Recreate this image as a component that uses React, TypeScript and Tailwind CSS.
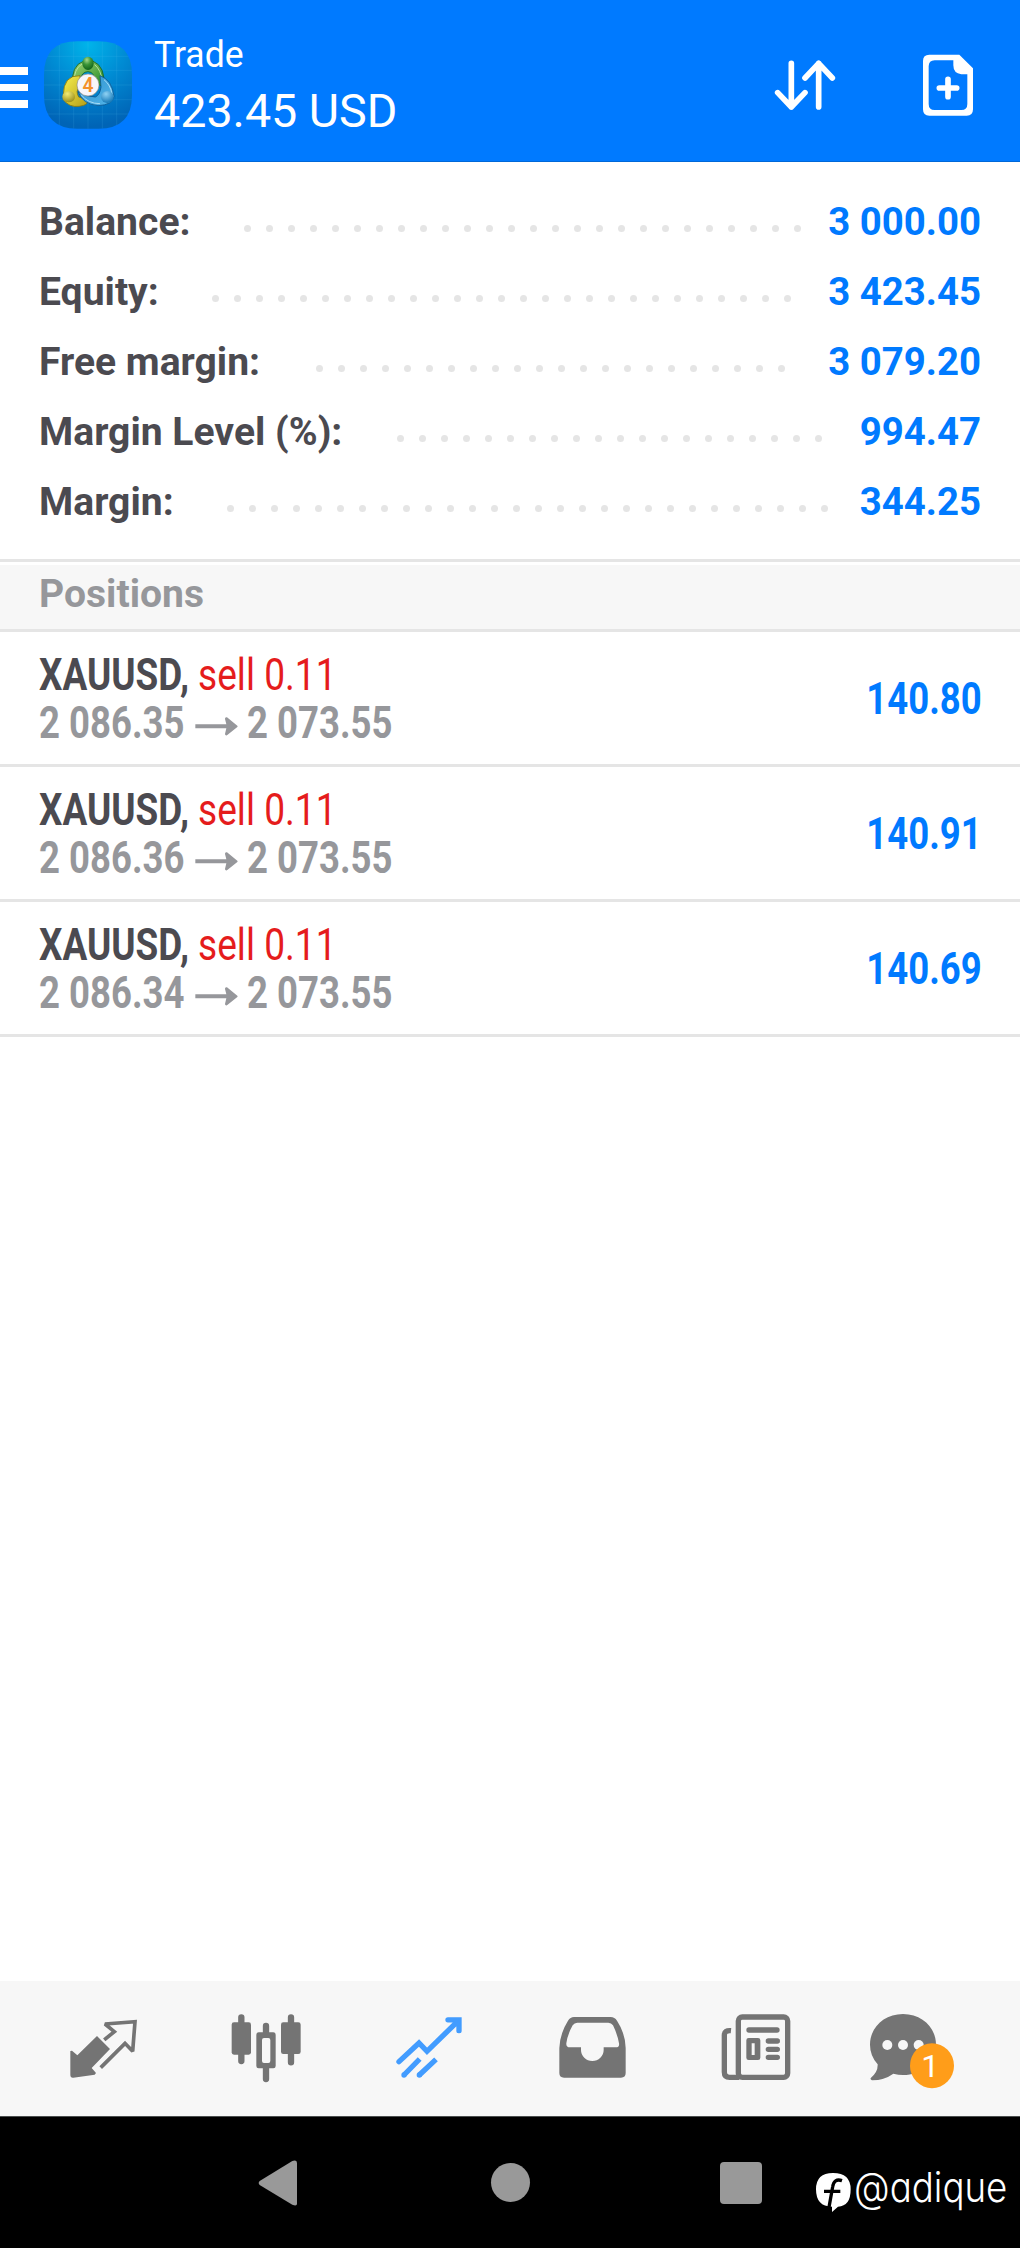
import React from "react";

const account = [
  { label: "Balance:", value: "3 000.00", lead: 205, dots: 26 },
  { label: "Equity:", value: "3 423.45", lead: 173, dots: 27 },
  { label: "Free margin:", value: "3 079.20", lead: 277, dots: 22 },
  { label: "Margin Level (%):", value: "994.47", lead: 358, dots: 20 },
  { label: "Margin:", value: "344.25", lead: 188, dots: 28 },
];

const positions = [
  { open: "2 086.35", current: "2 073.55", profit: "140.80" },
  { open: "2 086.36", current: "2 073.55", profit: "140.91" },
  { open: "2 086.34", current: "2 073.55", profit: "140.69" },
];

function Logo() {
  return (
    <svg className="h-[88px] w-[88px]" viewBox="132 124 264 264">
      <defs>
        <radialGradient id="tile" gradientUnits="userSpaceOnUse" cx="264" cy="135" r="245">
          <stop offset="0" stopColor="#00b4ea" />
          <stop offset="0.5" stopColor="#0089d2" />
          <stop offset="1" stopColor="#0064b6" />
        </radialGradient>
        <linearGradient id="green" x1="0" y1="0" x2="1" y2="1">
          <stop offset="0" stopColor="#a6d873" />
          <stop offset="1" stopColor="#1c8526" />
        </linearGradient>
        <linearGradient id="yellow" x1="0" y1="0" x2="1" y2="1">
          <stop offset="0" stopColor="#f7f04e" />
          <stop offset="1" stopColor="#b49d17" />
        </linearGradient>
        <linearGradient id="blue" x1="0" y1="0" x2="1" y2="1">
          <stop offset="0" stopColor="#2b8fcb" />
          <stop offset="1" stopColor="#55b6ea" />
        </linearGradient>
        <radialGradient id="greenBall" cx=".4" cy=".25" r=".8">
          <stop offset="0" stopColor="#a5d98c" />
          <stop offset=".45" stopColor="#3a9437" />
          <stop offset="1" stopColor="#0c5d17" />
        </radialGradient>
        <radialGradient id="yellowBall" cx=".4" cy=".25" r=".8">
          <stop offset="0" stopColor="#f3ec75" />
          <stop offset="1" stopColor="#968a16" />
        </radialGradient>
        <radialGradient id="blueBall" cx=".4" cy=".25" r=".8">
          <stop offset="0" stopColor="#8fd2f4" />
          <stop offset="1" stopColor="#0d73b4" />
        </radialGradient>
      </defs>
      <path d="M132 225Q132 125 232 125H296Q396 125 396 225V286Q396 387 296 387H232Q132 387 132 286Z" fill="url(#tile)" />
      <path d="M178 136V376M221 126V386M264 125V387M307 126V386M350 136V376M143 170H385M133 212H395M132 256H396M133 300H395M143 343H385" stroke="#5cc4f4" strokeOpacity=".22" strokeWidth="2" fill="none" />
      <path d="M217 262Q212 196 252 184L264 208L278 184Q318 200 311 262L286 250Q284 216 264 216Q244 216 240 244Z" fill="url(#green)" stroke="#136123" strokeWidth="2.5" />
      <path d="M222 250Q221 208 246 193M306 244Q304 212 284 195" fill="none" stroke="#b7e29a" strokeWidth="3" />
      <path d="M190 286Q190 226 240 228L238 262Q226 274 236 292L262 300Q268 316 238 320Q208 324 190 300Z" fill="url(#yellow)" stroke="#85770e" strokeWidth="2.5" />
      <path d="M234 276Q262 292 286 292Q300 286 303 262L300 228Q336 240 342 290Q338 316 294 318Q248 314 234 276Z" fill="url(#blue)" stroke="#0c5790" strokeWidth="2.5" />
      <path d="M244 286Q264 312 300 312M312 240Q332 256 336 284" fill="none" stroke="#a6dbf6" strokeWidth="3" />
      <ellipse cx="264" cy="191" rx="17" ry="20" fill="url(#greenBall)" />
      <ellipse cx="206" cy="291" rx="19" ry="17" fill="url(#yellowBall)" />
      <ellipse cx="322" cy="292" rx="19" ry="18" fill="url(#blueBall)" />
      <circle cx="264" cy="256" r="33" fill="#f7f6fa" stroke="#8a8a86" strokeWidth="2" />
      <text x="264" y="276" textAnchor="middle" fontFamily="Roboto, sans-serif" fontSize="58" fontWeight="600" fill="#f4912b">4</text>
    </svg>
  );
}

function Header() {
  return (
    <header className="flex h-[162px] items-start border-b border-[#0068d8] bg-[#007aff] text-white">
      <div className="mt-[67px] flex w-7 flex-col gap-[9px]">
        <span className="h-[7.5px] bg-white" />
        <span className="h-[7.5px] bg-white" />
        <span className="h-[7.5px] bg-white" />
      </div>
      <div className="ml-4 mt-[41px]"><Logo /></div>
      <div className="ml-[22px] mt-[33px] flex-1 whitespace-nowrap">
        <div className="text-[36.5px] leading-[43px]"><span className="inline-block origin-left scale-x-[0.975]">Trade</span></div>
        <div className="mt-[7px] text-[47px] leading-[55px]"><span className="inline-block origin-left scale-x-[0.992]">423.45 USD</span></div>
      </div>
      <svg className="mt-[57px] h-14 w-16 shrink-0" viewBox="99 111 192 168" fill="none" stroke="#fff" strokeWidth="17" strokeLinecap="round" strokeLinejoin="round">
        <path d="M154 130V261M113 218L154 261L195 218M236 261V130M195 174L236 130L277 174" />
      </svg>
      <svg className="ml-[85px] mr-[45px] mt-[54px] h-16 w-[53px] shrink-0" viewBox="546 102 159 192">
        <path fill="#fff" fillRule="evenodd" d="M568 104H658L699 145V268Q699 287 680 287H568Q549 287 549 268V123Q549 104 568 104ZM640 121H584Q566 121 566 139V252Q566 270 584 270H664Q682 270 682 252V163H664Q640 160 640 136Z" />
        <path d="M624 178V230M598 204H650" stroke="#fff" strokeWidth="17" strokeLinecap="round" />
      </svg>
    </header>
  );
}

function AccountRow({ row }: { row: (typeof account)[number] }) {
  return (
    <div className="flex h-[70px] items-center whitespace-nowrap text-[38.4px] font-bold">
      <div className="text-[#4b4a50]" style={{ width: row.lead }}><span className="inline-block origin-left scale-x-[1.018]">{row.label}</span></div>
      <div className="mt-[13px] flex gap-[15px]">
        {Array.from({ length: row.dots }, (_, i) => (
          <span key={i} className="size-[7px] rounded-full bg-[#e5e5e5]" />
        ))}
      </div>
      <div className="ml-auto text-[#007aff]">{row.value}</div>
    </div>
  );
}

function PositionRow({ row }: { row: (typeof positions)[number] }) {
  return (
    <div className="flex h-[135px] items-center justify-between whitespace-nowrap border-b-[3px] border-[#e5e5e5] pl-[39px] pr-[38px] pt-[3px] text-[43.6px] font-bold">
      <div className="leading-[48px]">
        <div className="flex h-12">
          <span className="w-[159px] text-[#4b4a50]"><span className="inline-block origin-left scale-x-[0.846]">XAUUSD,</span></span>
          <span className="inline-block origin-left scale-x-[0.852] font-normal text-[#e51c1c]">sell 0.11</span>
        </div>
        <div className="flex h-12 items-center text-[#96979b]">
          <span className="w-[156px]"><span className="inline-block origin-left scale-x-[0.838]">{row.open}</span></span>
          <svg className="mt-[5px] h-5 w-[43px]" viewBox="0 0 129 60">
            <path d="M1 25H94L90 9Q89 3 96 4L127 29Q129 31 127 33L96 58Q90 59 90 54L94 37H1Z" fill="currentColor" />
          </svg>
          <span className="ml-[9px] inline-block origin-left scale-x-[0.838]">{row.current}</span>
        </div>
      </div>
      <span className="inline-block origin-right scale-x-[0.838] text-[#007aff]">{row.profit}</span>
    </div>
  );
}

function TabBar() {
  const icon = "h-[135px] w-[163px]";
  return (
    <nav className="flex h-[135px] bg-[#f7f7f7] px-[21px] text-[#747474]">
      <svg className={icon} viewBox="63 33 489 405">
        <path d="M291 198L330 237L275 294L288 309L284 314L220 323Q211 324 211 314V243L216 242L232 256Z" fill="currentColor" />
        <path d="M317 206L343 185L315 162L405 155L398 244L375 220L306 289" fill="none" stroke="currentColor" strokeWidth="11" strokeLinejoin="miter" strokeLinecap="square" strokeMiterlimit="2" />
      </svg>
      <svg className={icon} viewBox="552 33 489 405" fill="none" stroke="currentColor" strokeLinecap="round">
        <path d="M724 142V273M873 142V277M798 168V190M798 294V327" strokeWidth="19" />
        <rect x="695" y="157" width="58" height="97" rx="7" fill="currentColor" stroke="none" />
        <rect x="843" y="157" width="59" height="95" rx="7" fill="currentColor" stroke="none" />
        <path fill="currentColor" stroke="none" fillRule="evenodd" d="M776 187H820Q827 187 827 194V288Q827 295 820 295H776Q769 295 769 288V194Q769 187 776 187ZM792 204Q786 204 786 210V273Q786 279 792 279H805Q811 279 811 273V210Q811 204 805 204Z" />
      </svg>
      <svg className={icon} viewBox="21 33 489 405" fill="none" stroke="#429cff" strokeWidth="16">
        <path d="M177 275L237 219L261 244L356 151M324 149.500H357V182" strokeLinecap="round" strokeLinejoin="miter" />
        <path d="M192 315L239 267M238 315L288 268" />
        <circle cx="192" cy="315" r="4" strokeWidth="8" />
        <circle cx="238" cy="315" r="4" strokeWidth="8" />
      </svg>
      <svg className={icon} viewBox="510 33 489 405">
        <path fill="currentColor" fillRule="evenodd" d="M702 141H812Q824 141 831 152Q856 190 857 234V309Q857 323 843 323H672Q658 323 658 309V234Q660 190 684 152Q691 141 702 141ZM712 158Q703 158 698 166Q682 195 679 220Q678 232 690 232H723V240A34 33 0 0 0 791 240V232H827Q839 232 837 220Q833 195 819 166Q814 158 805 158Z" />
      </svg>
      <svg className={icon} viewBox="-21 33 489 405" fill="none" stroke="currentColor" strokeWidth="16">
        <rect x="175" y="141" width="148" height="181" rx="12" />
        <path d="M153 182Q133 180 133 196V306Q133 322 149 322H178" />
        <path d="M207 180H291M265 213H292M265 238H292M265 262H292" strokeLinecap="round" />
        <path fill="currentColor" stroke="none" fillRule="evenodd" d="M206 204H234Q241 204 241 211V263Q241 270 234 270H206Q199 270 199 263V211Q199 204 206 204ZM215 220V255H224V220Z" />
      </svg>
      <svg className={icon} viewBox="468 33 489 405">
        <path fill="currentColor" d="M669 132C727 132 768 174 768 224C768 277 725 315 669 315Q655 315 640 311Q614 330 576 331Q569 328 573 323Q594 306 593 283Q570 257 570 224C570 173 612 132 669 132Z" />
        <g fill="#f7f7f7"><circle cx="622" cy="225" r="15" /><circle cx="669" cy="225" r="15" /><circle cx="716" cy="225" r="15" /></g>
        <ellipse cx="756" cy="287" rx="66" ry="67.500" fill="#ff9d19" />
        <text x="751" y="322" textAnchor="middle" fontFamily="Roboto, sans-serif" fontSize="96" fill="#fff">1</text>
      </svg>
    </nav>
  );
}

function SystemBar() {
  return (
    <footer className="flex h-[132px] items-start border-t border-[#4b4f4f] bg-black">
      <svg className="ml-[258px] mt-[43px] h-[46px] w-10 shrink-0" viewBox="0 0 120 138">
        <path d="M5 63L103 3Q117 -1 117 9V131Q117 140 103 134L5 75Q-1 69 5 63Z" fill="#999" />
      </svg>
      <div className="ml-[193px] mt-[46px] size-[39px] shrink-0 rounded-full bg-[#999]" />
      <div className="ml-[190px] mt-[45px] size-[41.500px] shrink-0 rounded-[4px] bg-[#999]" />
      <svg className="ml-[53px] mt-[55px] h-[42px] w-[37px] shrink-0" viewBox="584 186 111 126">
        <path fill="#fff" d="M587 238Q587 189 638 189Q691 189 691 238Q691 289 653 290L635 306V290Q587 290 587 238Z" />
        <path d="M665 212Q641 204 637 230L626 292M611 244H660" fill="none" stroke="#000" strokeWidth="10" />
      </svg>
      <div className="ml-[2px] mt-[45px] w-[160px] shrink-0">
        <span className="inline-block origin-left scale-x-[0.895] whitespace-nowrap font-['Inter',sans-serif] text-[41px] font-light leading-[50px] text-white [font-feature-settings:'cv11']">@adique</span>
      </div>
    </footer>
  );
}

export default function App() {
  return (
    <div className="flex h-[2248px] w-[1020px] flex-col overflow-hidden bg-white font-['Roboto',sans-serif]">
      <Header />
      <section className="h-[400px] border-b-[3px] border-[#e5e5e5] px-[39px] pt-[25px]">
        {account.map((row) => <AccountRow key={row.label} row={row} />)}
      </section>
      <h2 className="mt-[3px] h-[67px] border-b-[3px] border-[#e5e5e5] bg-[#f7f7f7] px-[39px] text-[38.4px] font-bold leading-[58px] text-[#96979b]">
        <span className="inline-block origin-left scale-x-[1.018]">Positions</span>
      </h2>
      <main className="flex-1">
        {positions.map((row) => <PositionRow key={row.open} row={row} />)}
      </main>
      <TabBar />
      <SystemBar />
    </div>
  );
}
